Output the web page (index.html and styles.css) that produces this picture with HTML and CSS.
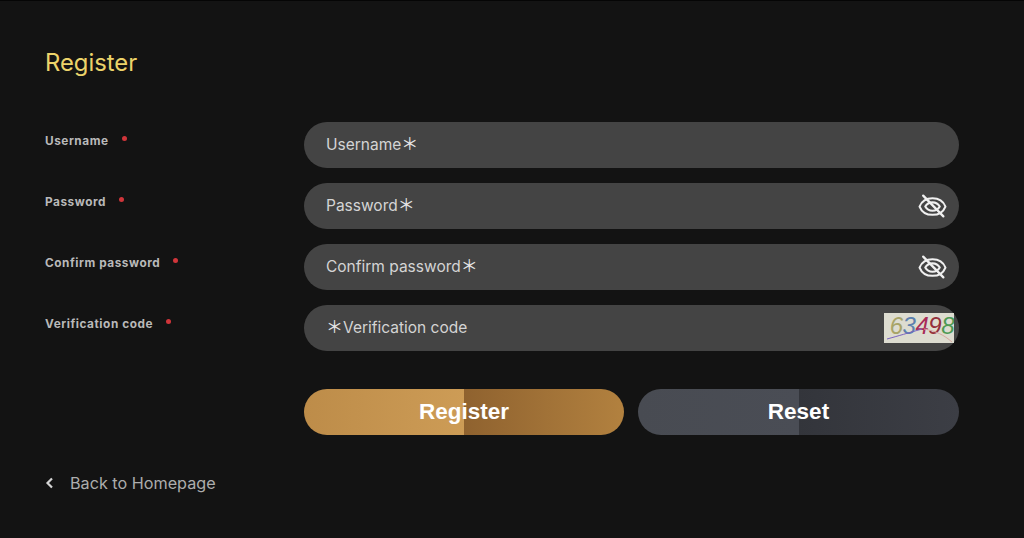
FILE: index.html
```html
<!DOCTYPE html>
<html lang="en">
<head>
<meta charset="utf-8">
<title>Register</title>
<link rel="stylesheet" href="styles.css">
</head>
<body>
<main class="page">
  <h1 class="title">Register</h1>
  <form class="form">
    <div class="row">
      <label class="label">Username<span class="req"></span></label>
      <div class="field"><span class="ph">Username<span class="star">＊</span></span></div>
    </div>
    <div class="row">
      <label class="label">Password<span class="req"></span></label>
      <div class="field"><span class="ph">Password<span class="star">＊</span></span>
        <svg class="eye" viewBox="0 0 28 24" fill="none" stroke="#f0f0f0" stroke-width="2" stroke-linecap="round" stroke-linejoin="round"><path d="M1.500 13C3.500 8 8 5 14 5S24.500 8 26.500 13C24.500 18 20 21 14 21S3.500 18 1.500 13Z"/><path d="M7 13C8.500 10.300 11 9 14 9S19.500 10.300 21 13C19.500 15.700 17 17 14 17S8.500 15.700 7 13Z"/><path d="M5 2.500 24.500 22.500" stroke-width="2.200"/></svg>
      </div>
    </div>
    <div class="row">
      <label class="label">Confirm password<span class="req"></span></label>
      <div class="field"><span class="ph">Confirm password<span class="star">＊</span></span>
        <svg class="eye" viewBox="0 0 28 24" fill="none" stroke="#f0f0f0" stroke-width="2" stroke-linecap="round" stroke-linejoin="round"><path d="M1.500 13C3.500 8 8 5 14 5S24.500 8 26.500 13C24.500 18 20 21 14 21S3.500 18 1.500 13Z"/><path d="M7 13C8.500 10.300 11 9 14 9S19.500 10.300 21 13C19.500 15.700 17 17 14 17S8.500 15.700 7 13Z"/><path d="M5 2.500 24.500 22.500" stroke-width="2.200"/></svg>
      </div>
    </div>
    <div class="row">
      <label class="label">Verification code<span class="req"></span></label>
      <div class="field"><span class="ph"><span class="star star-lead">＊</span>Verification code</span>
        <div class="captcha">
          <span class="d1">6</span><span class="d2">3</span><span class="d3">4</span><span class="d4">9</span><span class="d5">8</span>
          <svg class="noise" viewBox="0 0 70 30" fill="none"><path d="M3 26C14 23 24 20 38 16" stroke="#7a62c0"/><path d="M40 16C52 18 60 22 68 29" stroke="#d8a8a0"/></svg>
        </div>
      </div>
    </div>
    <div class="actions">
      <button type="button" class="btn btn-gold">Register</button>
      <button type="button" class="btn btn-gray">Reset</button>
    </div>
  </form>
  <a class="back" href="#">
    <svg class="chev" viewBox="0 0 8 12" fill="none" stroke="#d4d4d4" stroke-width="2.200"><path d="M6.500 1.500 2 6l4.500 4.500"/></svg>
    Back to Homepage
  </a>
</main>
</body>
</html>
```
FILE: styles.css
```css
* { box-sizing: border-box; }
html, body { margin: 0; height: 100%; }
body {
  background: #131313;
  font-family: Inter, "Liberation Sans", sans-serif;
  overflow: hidden;
}
.page {
  height: 538px;
  padding: 47px 65px 0 45px;
  border-top: 1px solid #050505;
}
.title {
  margin: 0 0 44px;
  font-size: 23.800px;
  line-height: 30px;
  font-weight: 400;
  color: #ecd36a;
}
.form { display: flex; flex-direction: column; }
.row {
  display: grid;
  grid-template-columns: 259px 655px;
  height: 45.500px;
  margin-bottom: 15.600px;
}
.label {
  font-size: 11.800px;
  line-height: 14px;
  font-weight: 700;
  letter-spacing: 0.550px;
  color: #b9b9b9;
  padding-top: 12px;
}
.req {
  display: inline-block;
  width: 5px;
  height: 5px;
  margin-left: 13px;
  border-radius: 50%;
  background: #d0353a;
  vertical-align: 4px;
}
.field {
  position: relative;
  display: flex;
  align-items: center;
  padding: 0 22px 1px;
  border-radius: 23px;
  background: #444444;
}
.ph { font-size: 15.500px; color: #d4d4d4; }
.star {
  display: inline-block;
  width: 16px;
  font-family: "Noto Sans CJK SC", sans-serif;
  font-size: 17px;
  line-height: 10px;
  text-align: center;
  color: #e4e4e4;
}
.star-lead { margin-right: 1px; }
.eye {
  position: absolute;
  right: 12px;
  top: 10px;
  width: 29px;
  height: 25px;
}
.captcha {
  position: absolute;
  right: 5px;
  top: 8px;
  width: 70px;
  height: 30px;
  display: flex;
  justify-content: flex-end;
  background: #dddcd0;
  font: italic 24px/25px "Liberation Sans", sans-serif;
  letter-spacing: -0.500px;
  overflow: hidden;
}
.noise { position: absolute; inset: 0; width: 100%; height: 100%; }
.d1 { color: #a8a468; }
.d2 { color: #5c80ae; }
.d3 { color: #a82c58; }
.d4 { color: #94303c; }
.d5 { color: #4e9a54; }
.actions {
  display: grid;
  grid-template-columns: 320px 321px;
  gap: 14px;
  margin: 22.600px 0 0 259px;
}
.btn {
  height: 46px;
  border: 0;
  border-radius: 23px;
  font: 700 22.500px "Liberation Sans", sans-serif;
  color: #fff;
}
.btn-gold { background: linear-gradient(90deg, #bd8c49 0%, #cd9c56 50%, #8f622f 50%, #b2813f 100%); }
.btn-gray { background: linear-gradient(90deg, #484b52 0%, #4a4d55 50%, #33353b 50%, #3c3e45 100%); }
.back {
  display: flex;
  align-items: center;
  gap: 16px;
  margin-top: 36.500px;
  font-size: 16.200px;
  line-height: 24px;
  color: #adadad;
  text-decoration: none;
}
.chev { width: 9px; height: 12px; }
```
